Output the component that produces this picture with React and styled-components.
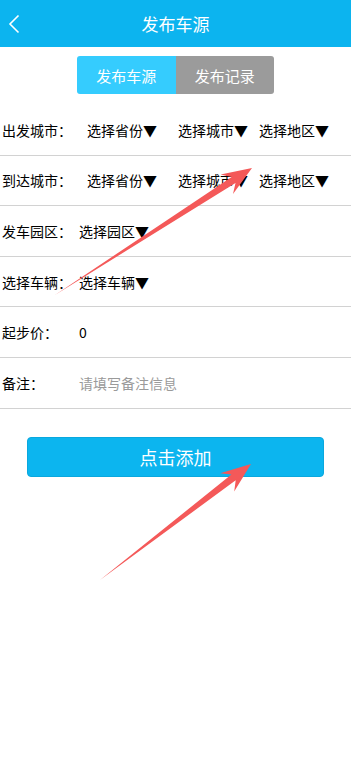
import React from "react";
import styled, { createGlobalStyle } from "styled-components";

const Global = createGlobalStyle`
  html, body { margin: 0; padding: 0; background: #ffffff; }
  body { font-family: "Noto Sans CJK SC", "Noto Sans", sans-serif; }
`;

const Page = styled.div`
  position: relative;
  width: 351px;
  min-height: 779px;
  background: #fff;
  overflow: hidden;
`;

const Header = styled.header`
  height: 47px;
  background: #0cb4ef;
  display: flex;
  align-items: center;
  justify-content: center;
  position: relative;
  color: #fff;
  font-size: 17px;
`;

const Back = styled.button`
  position: absolute;
  left: 4px;
  top: 12px;
  width: 20px;
  height: 24px;
  padding: 0;
  border: 0;
  background: none;
  display: flex;
  align-items: center;
  justify-content: center;
`;

const Tabs = styled.div`
  margin: 9px auto 0;
  width: 197px;
  height: 38px;
  display: flex;
  border-radius: 3px;
  overflow: hidden;
`;

const Tab = styled.div`
  flex: 1;
  display: flex;
  align-items: center;
  justify-content: center;
  color: #fff;
  font-size: 15px;
  background: ${(p) => (p.$active ? "#35ccfe" : "#9b9b9b")};
`;

const Form = styled.div`
  margin-top: 11px;
`;

const Row = styled.div`
  height: 49.6px;
  border-bottom: 1px solid #d2d2d2;
  display: grid;
  grid-template-columns: ${(p) => p.$cols};
  align-items: center;
  padding-left: 2px;
  font-size: 14px;
  color: #000;
  white-space: nowrap;
`;

const Value = styled.span`
  color: ${(p) => (p.$muted ? "#9a9a9a" : "#000")};
`;

const Submit = styled.button`
  display: flex;
  align-items: center;
  justify-content: center;
  margin: 28px 0 0 27px;
  width: 297px;
  height: 40px;
  border: 1px solid #0aa8de;
  border-radius: 4px;
  background: #0cb5ef;
  color: #fff;
  font-family: inherit;
  font-size: 18px;
  padding: 0;
`;

const Overlay = styled.svg`
  position: absolute;
  left: 0;
  top: 0;
  pointer-events: none;
`;

function arrowPoints(tx, ty, hx, hy) {
  const dx = hx - tx;
  const dy = hy - ty;
  const len = Math.hypot(dx, dy);
  const ux = dx / len;
  const uy = dy / len;
  const px = -uy;
  const py = ux;
  const headLen = 30;
  const neck = 22;
  const neckW = 3.6;
  const wingW = 11.5;
  const nx = hx - ux * neck;
  const ny = hy - uy * neck;
  const wx = hx - ux * headLen;
  const wy = hy - uy * headLen;
  const pts = [
    [tx, ty],
    [nx + px * neckW, ny + py * neckW],
    [wx + px * wingW, wy + py * wingW],
    [hx, hy],
    [wx - px * wingW, wy - py * wingW],
    [nx - px * neckW, ny - py * neckW],
  ];
  return pts.map((p) => p.map((v) => v.toFixed(1)).join(",")).join(" ");
}

const rows = [
  { label: "出发城市：", cols: "85px 91px 81px auto", values: ["选择省份▼", "选择城市▼", "选择地区▼"] },
  { label: "到达城市：", cols: "85px 91px 81px auto", values: ["选择省份▼", "选择城市▼", "选择地区▼"] },
  { label: "发车园区：", cols: "77px auto", values: ["选择园区▼"] },
  { label: "选择车辆：", cols: "77px auto", values: ["选择车辆▼"] },
  { label: "起步价：", cols: "77px auto", values: ["0"] },
  { label: "备注：", cols: "77px auto", values: ["请填写备注信息"], muted: true },
];

export default function App() {
  return (
    <Page>
      <Global />
      <Header>
        <Back aria-label="返回">
          <svg width="12" height="20" viewBox="0 0 12 20">
            <path d="M10.5 1.5 L2 10 L10.5 18.5" fill="none" stroke="#fff" strokeWidth="1.6" />
          </svg>
        </Back>
        发布车源
      </Header>
      <Tabs>
        <Tab $active>发布车源</Tab>
        <Tab>发布记录</Tab>
      </Tabs>
      <Form>
        {rows.map((r) => (
          <Row key={r.label} $cols={r.cols}>
            <span>{r.label}</span>
            {r.values.map((v, i) => (
              <Value key={i} $muted={r.muted}>{v}</Value>
            ))}
          </Row>
        ))}
      </Form>
      <Submit>点击添加</Submit>
      <Overlay width="351" height="779" viewBox="0 0 351 779">
        <polygon points={arrowPoints(55, 295, 252, 168)} fill="#f45959" />
        <polygon points={arrowPoints(100, 580, 251, 464)} fill="#f45959" />
      </Overlay>
    </Page>
  );
}
